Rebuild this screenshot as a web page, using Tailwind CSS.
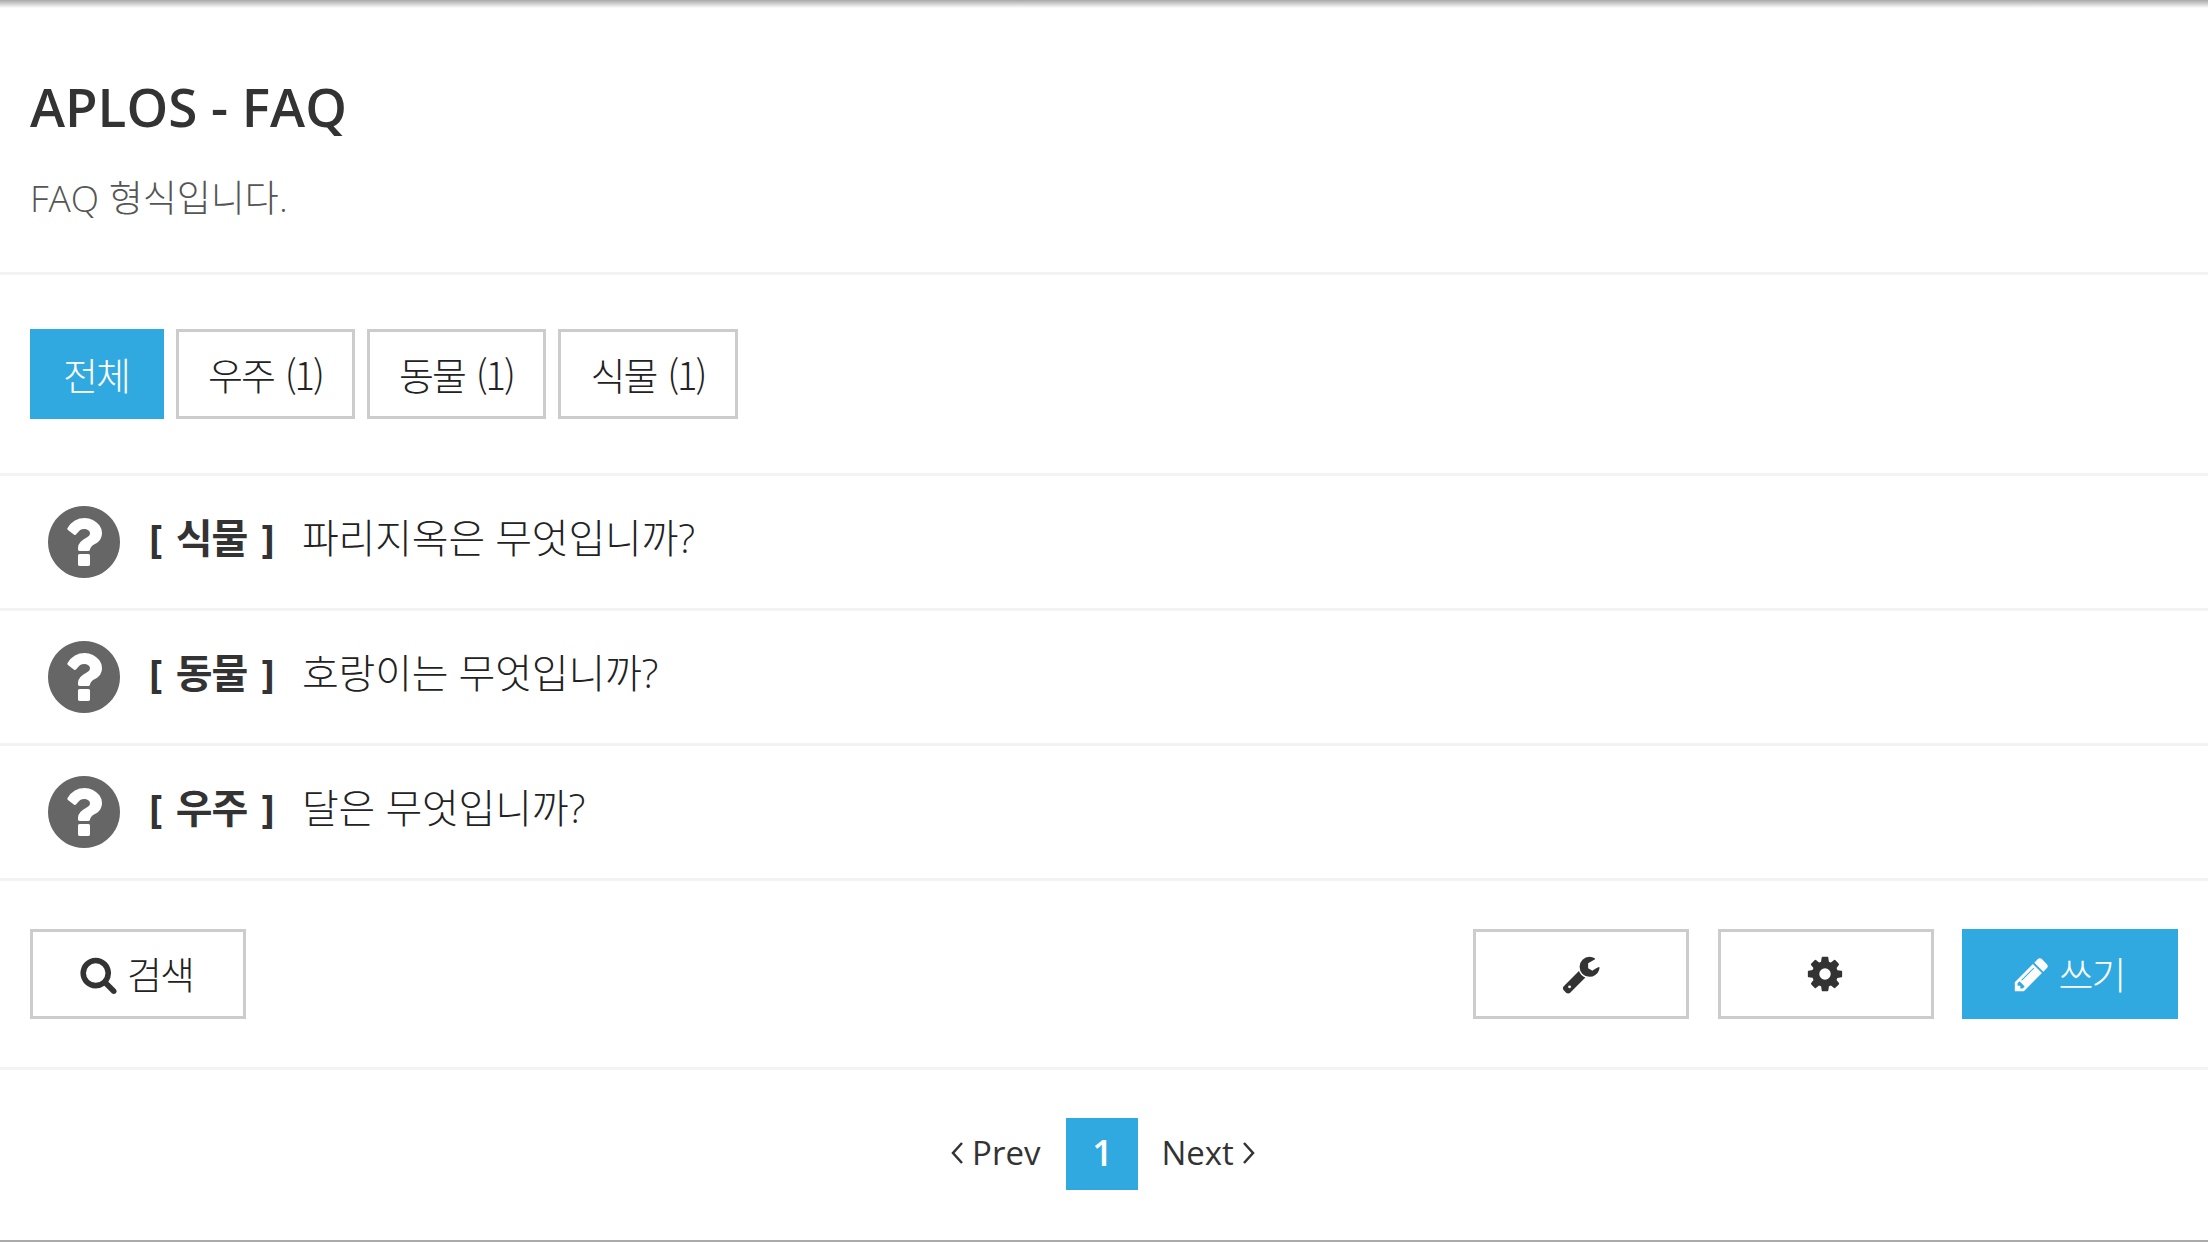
<!DOCTYPE html>
<html lang="ko">
<head>
  <meta charset="UTF-8" />
  <title>APLOS - FAQ</title>
  <script src="https://cdn.jsdelivr.net/npm/@tailwindcss/browser@4"></script>
</head>
<body class="bg-white text-[#333] font-['Open_Sans','Noto_Sans_CJK_KR',sans-serif] h-[1242px] overflow-hidden">
  <div class="h-[8px] bg-linear-to-b from-[#a8a8a8] to-white"></div>

  <!-- header -->
  <header class="h-[267px] border-b-[3px] border-[#f3f3f3] px-[30px] pt-[64px]">
    <h1 class="text-[53px] leading-[70px] font-semibold">APLOS - FAQ</h1>
    <p class="mt-[31px] text-[37px] leading-[50px] font-light text-[#555]">FAQ 형식입니다.</p>
  </header>

  <!-- category tabs -->
  <nav class="h-[201px] border-b-[3px] border-[#f3f3f3] px-[30px] pt-[54px] flex items-start gap-[12px] font-['Noto_Sans_CJK_KR',sans-serif] text-[38px] font-light leading-[84px] tracking-[-2px]">
    <a class="h-[90px] w-[134px] flex items-center justify-center pr-[2px] bg-[#30a9e0] text-white">전체</a>
    <a class="h-[90px] w-[179px] flex items-center justify-center border-[3px] border-[#ccc] text-[#222] [word-spacing:2px]">우주 (1)</a>
    <a class="h-[90px] w-[179px] flex items-center justify-center border-[3px] border-[#ccc] text-[#222] [word-spacing:2px]">동물 (1)</a>
    <a class="h-[90px] w-[180px] flex items-center justify-center border-[3px] border-[#ccc] text-[#222] [word-spacing:2px]">식물 (1)</a>
  </nav>

  <!-- faq list -->
  <ul class="text-[40px] font-light text-[#222] tracking-[-0.2px]">
    <li class="h-[135px] border-b-[3px] border-[#f3f3f3] pl-[48px] flex items-center">
      <svg class="w-[72px] h-[72px] fill-[#666]" viewBox="128 128 1536 1536"><path d="M1024 1376v-192q0-14-9-23t-23-9h-192q-14 0-23 9t-9 23v192q0 14 9 23t23 9h192q14 0 23-9t9-23zm256-672q0-88-55.500-163t-138.500-116-170-41q-243 0-371 213-15 24 8 42l132 100q7 6 19 6 16 0 25-12 53-68 86-92 34-24 86-24 48 0 85.500 26t37.500 59q0 38-20 61t-68 45q-63 28-115.500 86.500t-52.500 125.500v36q0 14 9 23t23 9h192q14 0 23-9t9-23q0-19 21.500-49.500t54.500-49.500q32-18 49-28.500t46-35 44.500-48 28-60.500 12.500-81zm384 192q0 209-103 385.500t-279.500 279.500-385.500 103-385.500-103-279.500-279.500-103-385.500 103-385.500 279.500-279.500 385.500-103 385.500 103 279.500 279.500 103 385.500z"/></svg>
      <b class="ml-[29px] mb-[8px] w-[153px] font-bold text-[#333] tracking-[-1px] [word-spacing:5px]">[ 식물 ]</b>
      <span class="mb-[8px]">파리지옥은 무엇입니까?</span>
    </li>
    <li class="h-[135px] border-b-[3px] border-[#f3f3f3] pl-[48px] flex items-center">
      <svg class="w-[72px] h-[72px] fill-[#666]" viewBox="128 128 1536 1536"><path d="M1024 1376v-192q0-14-9-23t-23-9h-192q-14 0-23 9t-9 23v192q0 14 9 23t23 9h192q14 0 23-9t9-23zm256-672q0-88-55.500-163t-138.500-116-170-41q-243 0-371 213-15 24 8 42l132 100q7 6 19 6 16 0 25-12 53-68 86-92 34-24 86-24 48 0 85.500 26t37.500 59q0 38-20 61t-68 45q-63 28-115.500 86.500t-52.500 125.500v36q0 14 9 23t23 9h192q14 0 23-9t9-23q0-19 21.500-49.500t54.500-49.500q32-18 49-28.500t46-35 44.500-48 28-60.500 12.500-81zm384 192q0 209-103 385.500t-279.500 279.500-385.500 103-385.500-103-279.500-279.500-103-385.500 103-385.500 279.500-279.500 385.500-103 385.500 103 279.500 279.500 103 385.500z"/></svg>
      <b class="ml-[29px] mb-[8px] w-[153px] font-bold text-[#333] tracking-[-1px] [word-spacing:5px]">[ 동물 ]</b>
      <span class="mb-[8px]">호랑이는 무엇입니까?</span>
    </li>
    <li class="h-[135px] border-b-[3px] border-[#f3f3f3] pl-[48px] flex items-center">
      <svg class="w-[72px] h-[72px] fill-[#666]" viewBox="128 128 1536 1536"><path d="M1024 1376v-192q0-14-9-23t-23-9h-192q-14 0-23 9t-9 23v192q0 14 9 23t23 9h192q14 0 23-9t9-23zm256-672q0-88-55.500-163t-138.500-116-170-41q-243 0-371 213-15 24 8 42l132 100q7 6 19 6 16 0 25-12 53-68 86-92 34-24 86-24 48 0 85.500 26t37.500 59q0 38-20 61t-68 45q-63 28-115.500 86.500t-52.500 125.500v36q0 14 9 23t23 9h192q14 0 23-9t9-23q0-19 21.500-49.500t54.500-49.500q32-18 49-28.500t46-35 44.500-48 28-60.500 12.500-81zm384 192q0 209-103 385.500t-279.500 279.500-385.500 103-385.500-103-279.500-279.500-103-385.500 103-385.500 279.500-279.500 385.500-103 385.500 103 279.500 279.500 103 385.500z"/></svg>
      <b class="ml-[29px] mb-[8px] w-[153px] font-bold text-[#333] tracking-[-1px] [word-spacing:5px]">[ 우주 ]</b>
      <span class="mb-[8px]">달은 무엇입니까?</span>
    </li>
  </ul>

  <!-- buttons -->
  <div class="h-[189px] border-b-[3px] border-[#f3f3f3] px-[30px] pt-[48px] flex items-start text-[38px] font-light tracking-[-2px]">
    <a class="h-[90px] w-[216px] flex items-center justify-center gap-[9px] pr-[4px] border-[3px] border-[#ccc] text-[#222]">
      <svg class="w-[39px] h-[39px] fill-[#333]" viewBox="0 0 1792 1792"><path d="M1216 832q0-185-131.500-316.500t-316.500-131.500-316.500 131.500-131.500 316.500 131.500 316.500 316.500 131.500 316.500-131.500 131.500-316.500zm512 832q0 52-38 90t-90 38q-54 0-90-38l-343-342q-179 124-399 124-143 0-273.500-55.500t-225-150-150-225-55.500-273.500 55.500-273.500 150-225 225-150 273.500-55.500 273.500 55.500 225 150 150 225 55.500 273.500q0 220-124 399l343 343q37 37 37 90z"/></svg>
      검색
    </a>
    <a class="ml-auto h-[90px] w-[216px] flex items-center justify-center border-[3px] border-[#ccc]">
      <svg class="w-[40px] h-[40px] fill-[#333]" viewBox="0 0 1792 1792"><path d="M448 1472q0-26-19-45t-45-19-45 19-19 45 19 45 45 19 45-19 19-45zm644-420l-682 682q-37 37-90 37-52 0-91-37l-106-108q-38-36-38-90 0-53 38-91l681-681q39 98 114.500 173.500t173.500 114.500zm634-435q0 39-23 106-47 134-164.500 217.500t-258.500 83.500q-185 0-316.500-131.500t-131.500-316.500 131.500-316.500 316.500-131.500q58 0 121.500 16.500t107.500 46.500q16 11 16 28t-16 28l-293 169v224l193 107q5-3 79-48.500t135.500-81 70.500-35.500q15 0 23.500 10t8.500 25z"/></svg>
    </a>
    <a class="ml-[29px] h-[90px] w-[216px] flex items-center justify-center pr-[2px] border-[3px] border-[#ccc]">
      <svg class="w-[40px] h-[40px] fill-[#333]" viewBox="0 0 1792 1792"><path d="M1152 896q0-106-75-181t-181-75-181 75-75 181 75 181 181 75 181-75 75-181zm512-109v222q0 12-8 23t-20 13l-185 28q-19 54-39 91 35 50 107 138 10 12 10 25t-9 23q-27 37-99 108t-94 71q-12 0-26-9l-138-108q-44 23-91 38-16 136-29 186-7 28-36 28h-222q-14 0-24.500-8.500t-11.500-21.500l-28-184q-49-16-90-37l-141 107q-10 9-25 9-14 0-25-11-126-114-165-168-7-10-7-23 0-12 8-23 15-21 51-66.500t54-70.500q-27-50-41-99l-183-27q-13-2-21-12.500t-8-23.500v-222q0-12 8-23t19-13l186-28q14-46 39-92-40-57-107-138-10-12-10-24 0-10 9-23 26-36 98.500-107.500t94.500-71.500q13 0 26 10l138 107q44-23 91-38 16-136 29-186 7-28 36-28h222q14 0 24.500 8.500t11.500 21.500l28 184q49 16 90 37l142-107q9-9 24-9 13 0 25 10 129 119 165 170 7 8 7 22 0 12-8 23-15 21-51 66.500t-54 70.500q26 50 41 98l183 28q13 2 21 12.500t8 23.500z"/></svg>
    </a>
    <a class="ml-[28px] h-[90px] w-[216px] flex items-center justify-center gap-[8px] pr-[4px] bg-[#30a9e0] text-white">
      <svg class="w-[39px] h-[39px] fill-white" viewBox="0 0 1792 1792"><path d="M491 1536l91-91-235-235-91 91v107h128v128h107zm523-928q0-22-22-22-10 0-17 7l-542 542q-7 7-7 17 0 22 22 22 10 0 17-7l542-542q7-7 7-17zm-54-192l416 416-832 832h-416v-416zm683 96q0 53-37 90l-166 166-416-416 166-165q36-38 90-38 53 0 91 38l235 234q37 39 37 91z"/></svg>
      쓰기
    </a>
  </div>

  <!-- pagination -->
  <div class="h-[172px] border-b-2 border-[#aaa] pt-[48px] pr-[2px] flex items-start justify-center text-[33px]">
    <a class="h-[72px] flex items-center gap-[8px] pb-[2px]">
      <svg class="w-[14px] h-[24px]" viewBox="0 0 14 24" fill="none" stroke="#333" stroke-width="2.5"><path d="M12 2 3 12l9 10"/></svg>
      Prev
    </a>
    <span class="ml-[26px] mr-[23px] w-[72px] h-[72px] flex items-center justify-center bg-[#30a9e0] text-white text-[36px] font-semibold pb-[2px]">1</span>
    <a class="h-[72px] flex items-center gap-[8px] pb-[2px]">
      Next
      <svg class="w-[14px] h-[24px]" viewBox="0 0 14 24" fill="none" stroke="#333" stroke-width="2.5"><path d="M2 2l9 10-9 10"/></svg>
    </a>
  </div>
</body>
</html>
